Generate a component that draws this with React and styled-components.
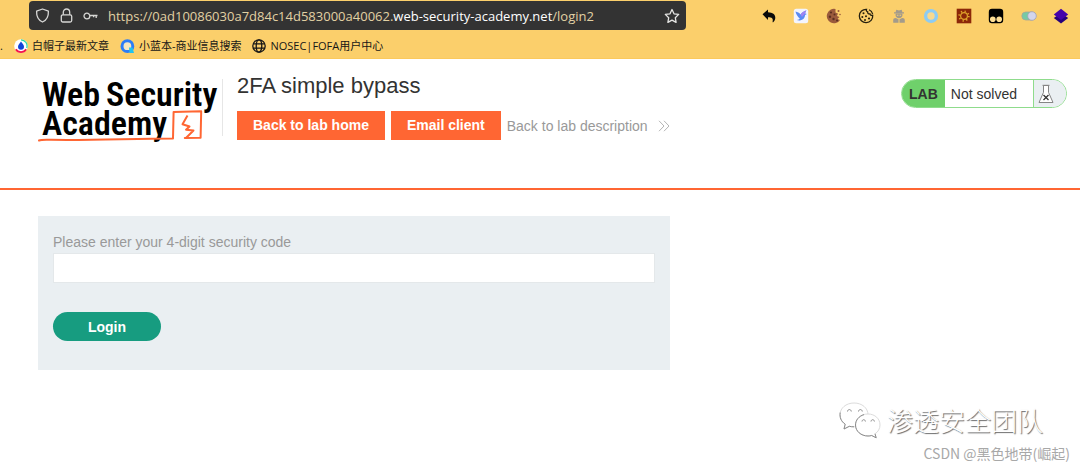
import { useState } from "react";
import styled, { createGlobalStyle } from "styled-components";

const GlobalStyle = createGlobalStyle`
  * {
    box-sizing: border-box;
  }

  body {
    margin: 0;
    background: #fff;
    font-family: "Liberation Sans", "Noto Sans CJK SC", sans-serif;
    font-size: 14px;
    color: #333332;
  }
`;

//Bookmark icons
const DropIcon = () => (
  <svg width="14" height="14" viewBox="0 0 14 14">
    <circle cx="7" cy="7" r="6.8" fill="#fff" />
    <path d="M7 .8A6.2 6.2 0 0 1 12.7 9" fill="none" stroke="#2bd9a5" strokeWidth="1.2" />
    <path d="M1.8 10.3a6.2 6.2 0 0 0 10.4 0" fill="none" stroke="#f4144f" strokeWidth="1.6" />
    <path d="M7 2.500c1 1.700 3 3.400 3 5.200a3 3 0 0 1-6 0c0-1.800 2-3.500 3-5.200z" fill="#1145d8" />
  </svg>
);

const QIcon = () => (
  <svg width="15" height="15" viewBox="0 0 15 15">
    <circle cx="7.400" cy="7.200" r="5.400" fill="#f7e8c0" stroke="#2d7df6" strokeWidth="3" />
    <path d="M9 8.500h3.500L14 14H9.500z" fill="#22c3ee" />
  </svg>
);

const GlobeIcon = () => (
  <svg width="14" height="14" viewBox="0 0 14 14" fill="none" stroke="#161616" strokeWidth="1.3">
    <circle cx="7" cy="7" r="6.200" />
    <ellipse cx="7" cy="7" rx="2.800" ry="6.200" />
    <path d="M1.300 4.800h11.400M1.300 9.200h11.400" />
  </svg>
);

//Address bar icons
const ShieldIcon = () => (
  <svg width="15" height="15" viewBox="0 0 15 15" fill="none" stroke="#d6d6d4" strokeWidth="1.3" strokeLinejoin="round">
    <path d="M7.500 1 13.400 3.200C13.600 8 11.800 12 7.500 14 3.200 12 1.400 8 1.600 3.200z" />
  </svg>
);

const LockIcon = () => (
  <svg width="13" height="15" viewBox="0 0 13 15" fill="none" stroke="#d6d6d4" strokeWidth="1.3">
    <rect x="1.300" y="6.800" width="10.400" height="7.200" rx="1.500" />
    <path d="M3.300 6.800V4.200a3.200 3.200 0 0 1 6.400 0v2.600" />
  </svg>
);

const KeyIcon = () => (
  <svg width="15" height="8" viewBox="0 0 15 8" fill="none" stroke="#d6d6d4" strokeWidth="1.3">
    <circle cx="3.900" cy="4" r="2.900" />
    <path d="M6.800 3.500H14.500M13.200 3.500v2.600M10.600 3.500v1.800" />
  </svg>
);

const StarIcon = () => (
  <svg width="16" height="16" viewBox="0 0 16 16" fill="none" stroke="#e6e6e4" strokeWidth="1.3" strokeLinejoin="round">
    <path d="m8 1.500 2 4.300 4.700.600-3.400 3.300.800 4.700L8 12.100l-4.100 2.300.800-4.700L1.300 6.400 6 5.800z" />
  </svg>
);

//Toolbar extension icons, all on a 16px grid
const extensions = [
  {
    name: "Undo",
    art: (
      <path
        d="M1.500 6.200 7 1.500v2.800c4.700.100 7.300 2.200 7.300 5.400 0 1.800-.800 3.400-2.100 4.500-.400.300-.800.100-.600-.400.800-3.300-.500-4.400-4.600-4.500v2.600z"
        fill="#0a0a0a"
      />
    ),
  },
  {
    name: "Bird",
    art: (
      <>
        <rect x=".8" y=".8" width="14.400" height="14.400" rx="2.500" fill="#f4f5fd" />
        <path d="M2.500 3.500c2 .400 3.800 1.300 5.100 2.900C9 4.500 10.800 3 13.400 2.500c-.800.900-1.200 1.800-1.200 3l1.700.500-1.800 1c-.200 3-2 5-5.200 5.500-1 .100-2.100 0-3-.400 1.400-.200 2.400-.700 3-1.300C4.800 9 3.200 6.500 2.500 3.500z" fill="#5a8bf4" />
        <path d="M7.600 6.400C9 4.500 10.800 3 13.400 2.500c-.800.900-1.200 1.800-1.200 3L9 9z" fill="#a184f2" />
      </>
    ),
  },
  {
    name: "Cookie",
    art: (
      <>
        <path d="M9.500 1A7.200 7.200 0 1 0 14 12l-2.500-1 2-2-2.500-1 1-2.500-2.500-1z" fill="#9a5a3c" />
        <g fill="#5b2f20">
          <circle cx="5" cy="4.500" r="1.100" />
          <circle cx="8.500" cy="6.500" r="1" />
          <circle cx="4" cy="8.800" r="1.200" />
          <circle cx="7.500" cy="11" r="1.200" />
          <circle cx="11" cy="12.500" r="1" />
        </g>
        <g fill="#9a5a3c">
          <circle cx="12.500" cy="3" r="1" />
          <circle cx="14" cy="6.500" r=".8" />
        </g>
      </>
    ),
  },
  {
    name: "Cookie editor",
    art: (
      <>
        <path
          d="M8.500 1.300a6.700 6.700 0 1 0 6.200 6c-1.400.400-2.600-.200-2.800-1.500-1.500.300-2.500-.600-2.200-1.900-1.100-.300-1.600-1.300-1.200-2.600z"
          fill="none"
          stroke="#26200f"
          strokeWidth="1.300"
        />
        <path d="M11 1.800c2 .800 3.200 2.300 3.700 4.300" fill="none" stroke="#26200f" strokeWidth="1.200" />
        <g fill="#26200f">
          <circle cx="5.500" cy="5.200" r="1" />
          <circle cx="4.300" cy="9" r="1" />
          <circle cx="8" cy="8.200" r="1" />
          <circle cx="7" cy="12" r="1" />
          <circle cx="11" cy="10.500" r="1.100" />
        </g>
      </>
    ),
  },
  {
    name: "Agent",
    art: (
      <g fill="#a39b8b">
        <path d="M5.300 1.700 8 2.400l2.700-.700.700 2.500h1.600v1.400H3V4.200h1.600z" />
        <path d="M4.600 5.600h6.800v2c0 1.500-1.400 2.600-3.400 2.600s-3.400-1.100-3.400-2.600z" />
        <path d="M2.200 14.800v-2.400c0-1.600.900-2.400 2.600-2.400l2.700 1.300v3.500zM13.800 14.800v-2.400c0-1.600-.900-2.400-2.600-2.400l-2.700 1.300v3.500z" />
        <path d="M5.900 6.800h1.500v.9H5.900zM8.600 6.800h1.500v.9H8.600z" fill="#fbcf6b" />
      </g>
    ),
  },
  {
    name: "Ring",
    art: <circle cx="8" cy="8" r="5.400" fill="#f8d98e" stroke="#8dccf3" strokeWidth="3.400" />,
  },
  {
    name: "Gear",
    art: (
      <>
        <rect x=".7" y=".7" width="14.600" height="14.600" fill="#8c2708" />
        <circle cx="8" cy="8" r="3.400" fill="none" stroke="#dfa32a" strokeWidth="1.200" />
        <circle cx="8" cy="8" r="4.800" fill="none" stroke="#dfa32a" strokeWidth="1.700" strokeDasharray="1.300 2.470" />
      </>
    ),
  },
  {
    name: "Script manager",
    art: (
      <>
        <rect x=".8" y=".8" width="14.400" height="14.400" rx="3.200" fill="#000" />
        <circle cx="4.800" cy="11.200" r="2.800" fill="#ffdf94" />
        <circle cx="11.200" cy="11.200" r="2.800" fill="#ffdf94" />
      </>
    ),
  },
  {
    name: "Switch",
    art: (
      <>
        <rect x=".8" y="4" width="14" height="8" rx="4" fill="#76caa5" stroke="#a8a69a" strokeWidth=".8" />
        <circle cx="11" cy="8" r="4.300" fill="#d3d5ec" stroke="#a3a2b4" strokeWidth=".8" />
      </>
    ),
  },
  {
    name: "Layers",
    art: (
      <>
        <path d="M.8 10 8 5l7.200 5L8 15.500z" fill="#26017c" />
        <path d="M.8 6.500 8 .8l7.200 5.700L8 12z" fill="#4402ab" />
      </>
    ),
  },
];

const bookmarks = [
  { label: "白帽子最新文章", icon: <DropIcon /> },
  { label: "小蓝本-商业信息搜索", icon: <QIcon /> },
  { label: "NOSEC|FOFA用户中心", icon: <GlobeIcon /> },
];

const AcademyLogo = () => (
  <LogoSvg width="180" height="66" viewBox="0 0 180 66" role="img" aria-label="Web Security Academy">
    <LogoText x="4" y="27">
      Web
    </LogoText>
    <LogoText x="68" y="27">
      Security
    </LogoText>
    <LogoText x="4" y="56">
      Academy
    </LogoText>
    <path
      d="M1 61.500c2-1 6-.900 12-.700 40 .700 80-1.200 122-1.300L135.600 33l27.600-.700-.600 26.500-15.800.200"
      fill="none"
      stroke="#ff6633"
      strokeWidth="2"
      strokeLinecap="round"
      strokeLinejoin="round"
    />
    <path
      d="m149.500 36.500-5 8.700 7 2.300-3.500 3.200 7.500.800-7.300 7.300"
      fill="none"
      stroke="#ff6633"
      strokeWidth="2"
      strokeLinejoin="round"
    />
  </LogoSvg>
);

const FlaskIcon = () => (
  <svg width="16" height="20" viewBox="0 0 16 20" fill="#fff" stroke="#858585" strokeWidth="1">
    <path d="M5.500 1.500v6.800L1 18.500h14L10.500 8.300V1.500z" />
    <path d="M4.500 1.300h7" />
    <path d="m5.500 11 5 5M10.500 11l-5 5" stroke="#333" strokeWidth="1.300" />
  </svg>
);

const ChevronsIcon = () => (
  <svg width="12" height="12" viewBox="0 0 12 12" fill="none" stroke="#b4b4b4" strokeWidth="1">
    <path d="m1 .8 5 5.200-5 5.200M6 .8 11 6l-5 5.200" />
  </svg>
);

const WeChatMark = () => (
  <svg width="44" height="38" viewBox="0 0 44 38" fill="#fff" strokeLinejoin="round">
    <path d="M16 2C8 2 2 7.200 2 13.800c0 3.900 2 7.200 5.200 9.400L6 28l5.300-2.700c1.500.400 3 .500 4.700.500 8 0 14-5.200 14-12S24 2 16 2z" stroke="#dcdcdc" />
    <path d="M2.200 11.500c-.800 5 1 9 5 11.700L6 28l5.300-2.700c1.500.400 3 .500 4.700.500" fill="none" stroke="#8c8c8c" />
    <path d="M30 13c-7 0-12.500 4.800-12.500 11S23 35 30 35c1.300 0 2.500-.100 3.700-.500l4.500 2.300-1.200-4c3.200-2 5-5.200 5-8.800C42 17.800 37 13 30 13z" stroke="#dcdcdc" />
    <path d="M26 13.600c-5 1.500-8.500 5.500-8.500 10.400C17.500 30.200 23 35 30 35c1.300 0 2.500-.100 3.700-.500l4.500 2.300-1.200-4" fill="none" stroke="#8c8c8c" />
    <path d="M9.500 10.500c.200-2.600 3.600-2.600 3.800 0M20.500 10.500c.200-2.600 3.600-2.600 3.800 0M24 20.500c.200-2.400 3.200-2.400 3.400 0M33 20.500c.200-2.400 3.200-2.400 3.400 0" fill="none" stroke="#8c8c8c" />
  </svg>
);

//Lab login page, second factor step
const App = () => {
  const [code, setCode] = useState("");

  const handleChange = (event) => {
    setCode(event.target.value);
  };

  const handleSubmit = (event) => {
    event.preventDefault();
  };

  return (
    <Page>
      <GlobalStyle />
      <BrowserBar>
        <Toolbar>
          <AddressBar>
            <ShieldIcon />
            <LockIcon />
            <KeyIcon />
            <Url>
              https://0ad10086030a7d84c14d583000a40062.
              <strong>web-security-academy.net</strong>/login2
            </Url>
            <IconButton type="button" aria-label="Bookmark this page">
              <StarIcon />
            </IconButton>
          </AddressBar>
          <Extensions>
            {extensions.map(({ name, art }) => (
              <IconButton type="button" key={name} aria-label={name}>
                <svg width="16" height="16" viewBox="0 0 16 16">
                  {art}
                </svg>
              </IconButton>
            ))}
          </Extensions>
        </Toolbar>
        <Bookmarks>
          <span>.</span>
          {bookmarks.map(({ label, icon }) => (
            <Bookmark href="#" key={label}>
              {icon}
              {label}
            </Bookmark>
          ))}
        </Bookmarks>
      </BrowserBar>

      <Header>
        <LogoLink href="#" aria-label="Web Security Academy">
          <AcademyLogo />
        </LogoLink>
        <Title>
          <h2>2FA simple bypass</h2>
          <Links>
            <OrangeLink href="#">Back to lab home</OrangeLink>
            <OrangeLink href="#">Email client</OrangeLink>
            <PlainLink href="#">
              Back to lab description
              <ChevronsIcon />
            </PlainLink>
          </Links>
        </Title>
        <Status>
          <StatusTag>LAB</StatusTag>
          <StatusText>Not solved</StatusText>
          <StatusIcon>
            <FlaskIcon />
          </StatusIcon>
        </Status>
      </Header>

      <Main>
        <LoginForm onSubmit={handleSubmit}>
          <label htmlFor="code">Please enter your 4-digit security code</label>
          <CodeInput id="code" name="code" value={code} onChange={handleChange} />
          <LoginButton type="submit">Login</LoginButton>
        </LoginForm>
      </Main>

      <Watermark>
        <Team>
          <WeChatMark />
          渗透安全团队
        </Team>
        <Author>CSDN @黑色地带(崛起)</Author>
      </Watermark>
    </Page>
  );
};

export default App;

const Page = styled.div`
  position: relative;
  min-height: 100vh;
`;

const BrowserBar = styled.div`
  padding-top: 1px;
  background: #fbcf6b;
  border-bottom: 1px solid #fbc95c;
`;

const Toolbar = styled.div`
  display: flex;
  align-items: center;
  justify-content: space-between;
  padding: 0 11px 0 29px;
`;

const AddressBar = styled.div`
  display: flex;
  align-items: center;
  flex: 0 1 657px;
  gap: 10px;
  height: 29px;
  padding: 0 6px;
  border-radius: 4px;
  background: #333;
`;

const Url = styled.div`
  flex: 1;
  white-space: nowrap;
  font-family: "Open Sans", "Noto Sans", sans-serif;
  font-size: 13px;
  line-height: 20px;
  color: #e2d1a3;

  strong {
    font-weight: 400;
    color: #fff;
  }
`;

const IconButton = styled.button`
  display: flex;
  padding: 0;
  border: 0;
  background: none;
  cursor: pointer;
`;

const Extensions = styled.div`
  display: flex;
  flex: 0 0 308px;
  justify-content: space-between;
`;

const Bookmarks = styled.nav`
  display: flex;
  align-items: center;
  gap: 11px;
  height: 28px;
  padding-top: 4px;
  font-family: "Open Sans", "Noto Sans CJK SC", sans-serif;
  font-size: 11px;
  line-height: 16px;
  color: #161616;
`;

const Bookmark = styled.a`
  display: flex;
  align-items: center;
  gap: 4px;
  color: inherit;
  text-decoration: none;
  white-space: nowrap;
`;

const Header = styled.header`
  display: flex;
  align-items: flex-start;
  height: 131px;
  padding: 14px 13px 0 38px;
  border-bottom: 2px solid #ff6633;
`;

const LogoLink = styled.a`
  display: flex;
  height: 57px;
  margin-top: 6px;
  padding-right: 4px;
  border-right: 1px solid #e6e6e6;
`;

const LogoSvg = styled.svg`
  flex: none;
  overflow: visible;
`;

const LogoText = styled.text`
  font-family: "Roboto Condensed", "Liberation Sans Narrow", Roboto, sans-serif;
  font-size: 34px;
  font-weight: 600;
  fill: #000;
`;

const Title = styled.div`
  flex: 1;
  padding-left: 14px;

  h2 {
    margin: 0 0 13px;
    font-size: 22px;
    line-height: 25px;
    font-weight: 400;
  }
`;

const Links = styled.div`
  display: flex;
  align-items: center;
  gap: 6px;
`;

const OrangeLink = styled.a`
  padding: 0 16px;
  line-height: 29px;
  background: #ff6633;
  color: #fff;
  font-size: 14px;
  font-weight: 700;
  text-decoration: none;
`;

const PlainLink = styled.a`
  display: flex;
  align-items: center;
  gap: 10px;
  color: #999;
  font-size: 14px;
  text-decoration: none;
`;

const Status = styled.div`
  display: flex;
  height: 29px;
  margin-top: 6px;
  overflow: hidden;
  border: 1px solid #8fdc8c;
  border-radius: 15px;
  line-height: 28px;
`;

const StatusTag = styled.strong`
  padding: 0 7px;
  background: #6fd06b;
`;

const StatusText = styled.span`
  padding: 0 16px 0 6px;
`;

const StatusIcon = styled.span`
  display: flex;
  align-items: center;
  padding: 0 12px 0 4px;
  border-left: 1px solid #8fdc8c;
  background: #eaeff2;
`;

const Main = styled.main`
  padding: 26px 38px;
`;

const LoginForm = styled.form`
  display: flex;
  flex-direction: column;
  align-items: flex-start;
  max-width: 632px;
  padding: 15px 15px 29px;
  background: #eaeff2;
  color: #999;

  label {
    line-height: 22px;
  }
`;

const CodeInput = styled.input`
  width: 100%;
  height: 30px;
  padding: 0 6px;
  border: 1px solid #e4e8ea;
  background: #fff;
  font-family: inherit;
  font-size: 14px;
`;

const LoginButton = styled.button`
  width: 108px;
  height: 29px;
  margin-top: 29px;
  border: 0;
  border-radius: 15px;
  background: #179c80;
  color: #fff;
  font-family: inherit;
  font-size: 14px;
  font-weight: 700;
  cursor: pointer;
`;

const Watermark = styled.div`
  position: absolute;
  right: 10px;
  bottom: 5px;
  display: flex;
  flex-direction: column;
  align-items: flex-end;
  gap: 4px;
  font-family: "Noto Sans CJK SC", sans-serif;
`;

const Team = styled.div`
  display: flex;
  align-items: center;
  gap: 5px;
  padding-right: 27px;
  font-size: 26px;
  line-height: 38px;
  font-weight: 300;
  color: #fff;
  text-shadow: 1px 1px 1px #666;
`;

const Author = styled.div`
  font-size: 14px;
  line-height: 20px;
  color: #a8a8a8;
`;
